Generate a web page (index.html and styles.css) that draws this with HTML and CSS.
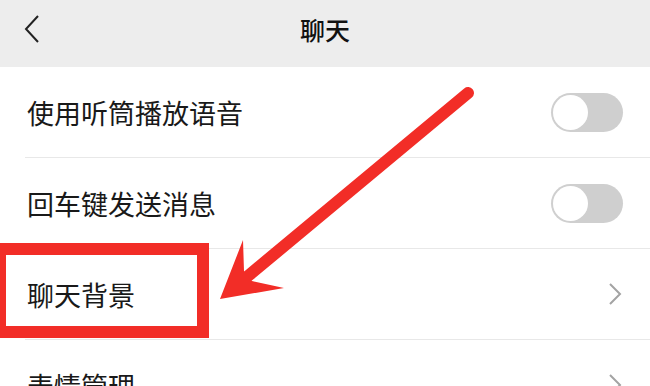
FILE: index.html
```html
<!DOCTYPE html>
<html lang="zh-CN">
<head>
    <meta charset="UTF-8">
    <meta name="viewport" content="width=device-width, initial-scale=1.0">
    <title>聊天</title>
    <link rel="stylesheet" href="styles.css">
</head>
<body>
    <div class="page">
        <div class="nav-bar">
            <span class="back">
                <svg width="16" height="28" viewBox="0 0 16 28"><path d="M14 1 L2 14 L14 27" fill="none" stroke="#222" stroke-width="2"/></svg>
            </span>
            <span class="title">聊天</span>
        </div>

        <div class="cell">
            <div class="cell-inner">
                <span class="label">使用听筒播放语音</span>
                <span class="switch"></span>
            </div>
        </div>
        <div class="cell">
            <div class="cell-inner">
                <span class="label">回车键发送消息</span>
                <span class="switch"></span>
            </div>
        </div>
        <div class="cell">
            <div class="cell-inner">
                <span class="label">聊天背景</span>
                <svg class="more" width="14" height="22" viewBox="0 0 14 22"><path d="M2 1 L12 11 L2 21" fill="none" stroke="#a3a3a3" stroke-width="2"/></svg>
            </div>
        </div>
        <div class="cell">
            <div class="cell-inner">
                <span class="label">表情管理</span>
                <svg class="more" width="14" height="22" viewBox="0 0 14 22"><path d="M2 1 L12 11 L2 21" fill="none" stroke="#a3a3a3" stroke-width="2"/></svg>
            </div>
        </div>

        <!-- annotation drawn over the screenshot -->
        <svg class="marks" width="650" height="386" viewBox="0 0 650 386">
            <rect x="0" y="249" width="203" height="83" fill="none" stroke="#f22d27" stroke-width="12"/>
            <line x1="468" y1="93" x2="248" y2="276" stroke="#f22d27" stroke-width="12" stroke-linecap="round"/>
            <polygon points="220,299 243,240 244,271 252,281 284,288" fill="#f22d27"/>
        </svg>
    </div>
</body>
</html>
```

FILE: styles.css
```css
body {
    margin: 0;
    background-color: #fff;
    font-family: "Noto Sans CJK SC", "Noto Sans", sans-serif;
    color: #191919;
}
.page {
    position: relative;
    width: 650px;
    height: 386px;
    overflow: hidden;
}
.nav-bar {
    position: relative;
    height: 58px;
    padding-bottom: 9px;
    display: flex;
    align-items: center;
    justify-content: center;
    background-color: #ededed;
}
.back {
    position: absolute;
    left: 24px;
    top: 15px;
    display: flex;
}
.title {
    font-size: 25px;
    font-weight: 500;
    color: #111;
}
.cell {
    padding-left: 25px;
    background-color: #fff;
}
.cell-inner {
    height: 90px;
    border-bottom: 1px solid #e8e8e8;
    display: flex;
    align-items: center;
    justify-content: space-between;
    padding-left: 2px;
    padding-right: 27px;
}
.label {
    font-size: 27px;
    line-height: 1;
}
.switch {
    position: relative;
    width: 72px;
    height: 39px;
    border-radius: 20px;
    background-color: #cfcfcf;
}
.switch:before {
    position: absolute;
    content: "";
    left: 2px;
    top: 2px;
    width: 35px;
    height: 35px;
    border-radius: 50%;
    background-color: #fff;
}
.more {
    margin-right: 1px;
}
.marks {
    position: absolute;
    top: 0;
    left: 0;
    pointer-events: none;
}
```
